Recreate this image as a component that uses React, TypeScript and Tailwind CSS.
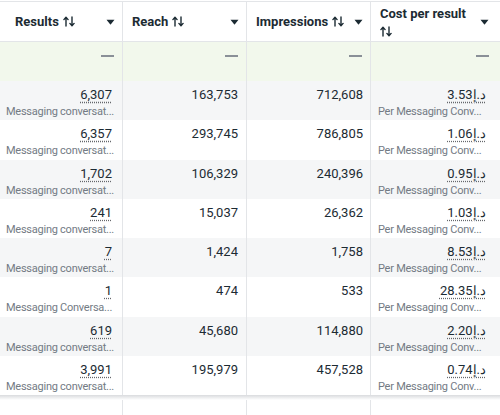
import React from "react";

const SortIcon = () => (
  <svg width="12" height="11" viewBox="0 0 12 11" className="inline-block" fill="none" stroke="#1c2b33" strokeWidth="1.4" strokeLinecap="round" strokeLinejoin="round">
    <path d="M3 10V1.5M0.9 3.6L3 1.3L5.1 3.6" />
    <path d="M9 1v8.5M6.9 7.4L9 9.7L11.1 7.4" />
  </svg>
);

const Caret = () => (
  <svg width="9" height="6" viewBox="0 0 9 6" className="shrink-0">
    <path d="M0.5 0.8h8L4.9 5.3a0.5 0.5 0 0 1-0.8 0z" fill="#1c2b33" />
  </svg>
);

type Row = {
  r: string;
  sub: string;
  reach: string;
  imp: string;
  cost: string;
};

const rows: Row[] = [
  { r: "6,307", sub: "Messaging conversat...", reach: "163,753", imp: "712,608", cost: "3.53" },
  { r: "6,357", sub: "Messaging conversat...", reach: "293,745", imp: "786,805", cost: "1.06" },
  { r: "1,702", sub: "Messaging conversat...", reach: "106,329", imp: "240,396", cost: "0.95" },
  { r: "241", sub: "Messaging conversat...", reach: "15,037", imp: "26,362", cost: "1.03" },
  { r: "7", sub: "Messaging conversat...", reach: "1,424", imp: "1,758", cost: "8.53" },
  { r: "1", sub: "Messaging Conversa...", reach: "474", imp: "533", cost: "28.35" },
  { r: "619", sub: "Messaging conversat...", reach: "45,680", imp: "114,880", cost: "2.20" },
  { r: "3,991", sub: "Messaging conversat...", reach: "195,979", imp: "457,528", cost: "0.74" },
];

const border = "border-r border-[#e3e5e8]";
const num = "text-[13px] leading-[16px] text-[#1c2b33]";
const sub = "text-[11px] leading-[15px] tracking-[-0.25px] text-[#737b84] whitespace-nowrap";
const dotted = "underline decoration-dotted decoration-[#65676b] underline-offset-[3px]";

export default function App() {
  return (
    <div
      className="w-[500px] h-[415px] overflow-hidden bg-white"
      style={{ fontFamily: "Roboto, 'Noto Sans', sans-serif" }}
    >
      <div className="h-px bg-white" />
      <div className="grid grid-cols-[123px_124px_124px_129px] border-t border-[#e3e5e8]">
        {/* header */}
        <div className={`${border} h-[40px] flex items-center justify-between pl-[15px] pr-[7px] border-b`}>
          <span className="text-[13px] font-bold text-[#1c2b33] flex items-center gap-[4px]">
            Results <SortIcon />
          </span>
          <Caret />
        </div>
        <div className={`${border} h-[40px] flex items-center justify-between pl-[9px] pr-[7px] border-b`}>
          <span className="text-[13px] font-bold text-[#1c2b33] flex items-center gap-[4px]">
            Reach <SortIcon />
          </span>
          <Caret />
        </div>
        <div className={`${border} h-[40px] flex items-center justify-between pl-[9px] pr-[7px] border-b`}>
          <span className="text-[13px] font-bold text-[#1c2b33] flex items-center gap-[4px]">
            Impressions <SortIcon />
          </span>
          <Caret />
        </div>
        <div className="h-[40px] flex items-center justify-between pl-[9px] pr-[11px] border-b border-[#e3e5e8]">
          <span className="text-[13px] font-bold text-[#1c2b33] leading-[17px] pt-[1px]">
            Cost per result
            <br />
            <SortIcon />
          </span>
          <Caret />
        </div>

        {/* summary row */}
        {[0, 1, 2, 3].map((i) => (
          <div
            key={i}
            className={`${i < 3 ? border : ""} h-[39px] bg-[#f2f8ec] flex justify-end pt-[7px] ${i === 3 ? "pr-[11px]" : "pr-[8px]"}`}
          >
            <span className="block w-[13px] h-[1.5px] bg-[#8a9097] mt-[6px]" />
          </div>
        ))}

        {rows.map((row, idx) => {
          const bg = idx % 2 === 0 ? "bg-[#f5f6f7]" : "bg-white";
          return (
            <React.Fragment key={idx}>
              <div className={`${border} ${bg} h-[39.25px] flex flex-col items-end pr-[10px] pt-[6px]`}>
                <span className={`${num} ${dotted}`}>{row.r}</span>
                <span className={`${sub} self-start pl-[6px] pt-[1px]`}>{row.sub}</span>
              </div>
              <div className={`${border} ${bg} h-[39.25px] flex justify-end pr-[8px] pt-[6px]`}>
                <span className={num}>{row.reach}</span>
              </div>
              <div className={`${border} ${bg} h-[39.25px] flex justify-end pr-[7px] pt-[6px]`}>
                <span className={num}>{row.imp}</span>
              </div>
              <div className={`${bg} h-[39.25px] flex flex-col items-end pr-[14px] pt-[6px]`}>
                <span className={`${num} ${dotted}`}>{row.cost}د.إ</span>
                <span className={`${sub} self-start pl-[7px] pt-[1px]`}>Per Messaging Conv...</span>
              </div>
            </React.Fragment>
          );
        })}
      </div>
      <div className="relative h-[30px]">
        <div className="absolute inset-x-0 top-0 h-[5px] bg-gradient-to-b from-[#d9dbde] to-white" />
        <div className="grid grid-cols-[123px_124px_124px_129px] h-full">
          <div className={border} />
          <div className={border} />
          <div className={border} />
          <div />
        </div>
      </div>
    </div>
  );
}
